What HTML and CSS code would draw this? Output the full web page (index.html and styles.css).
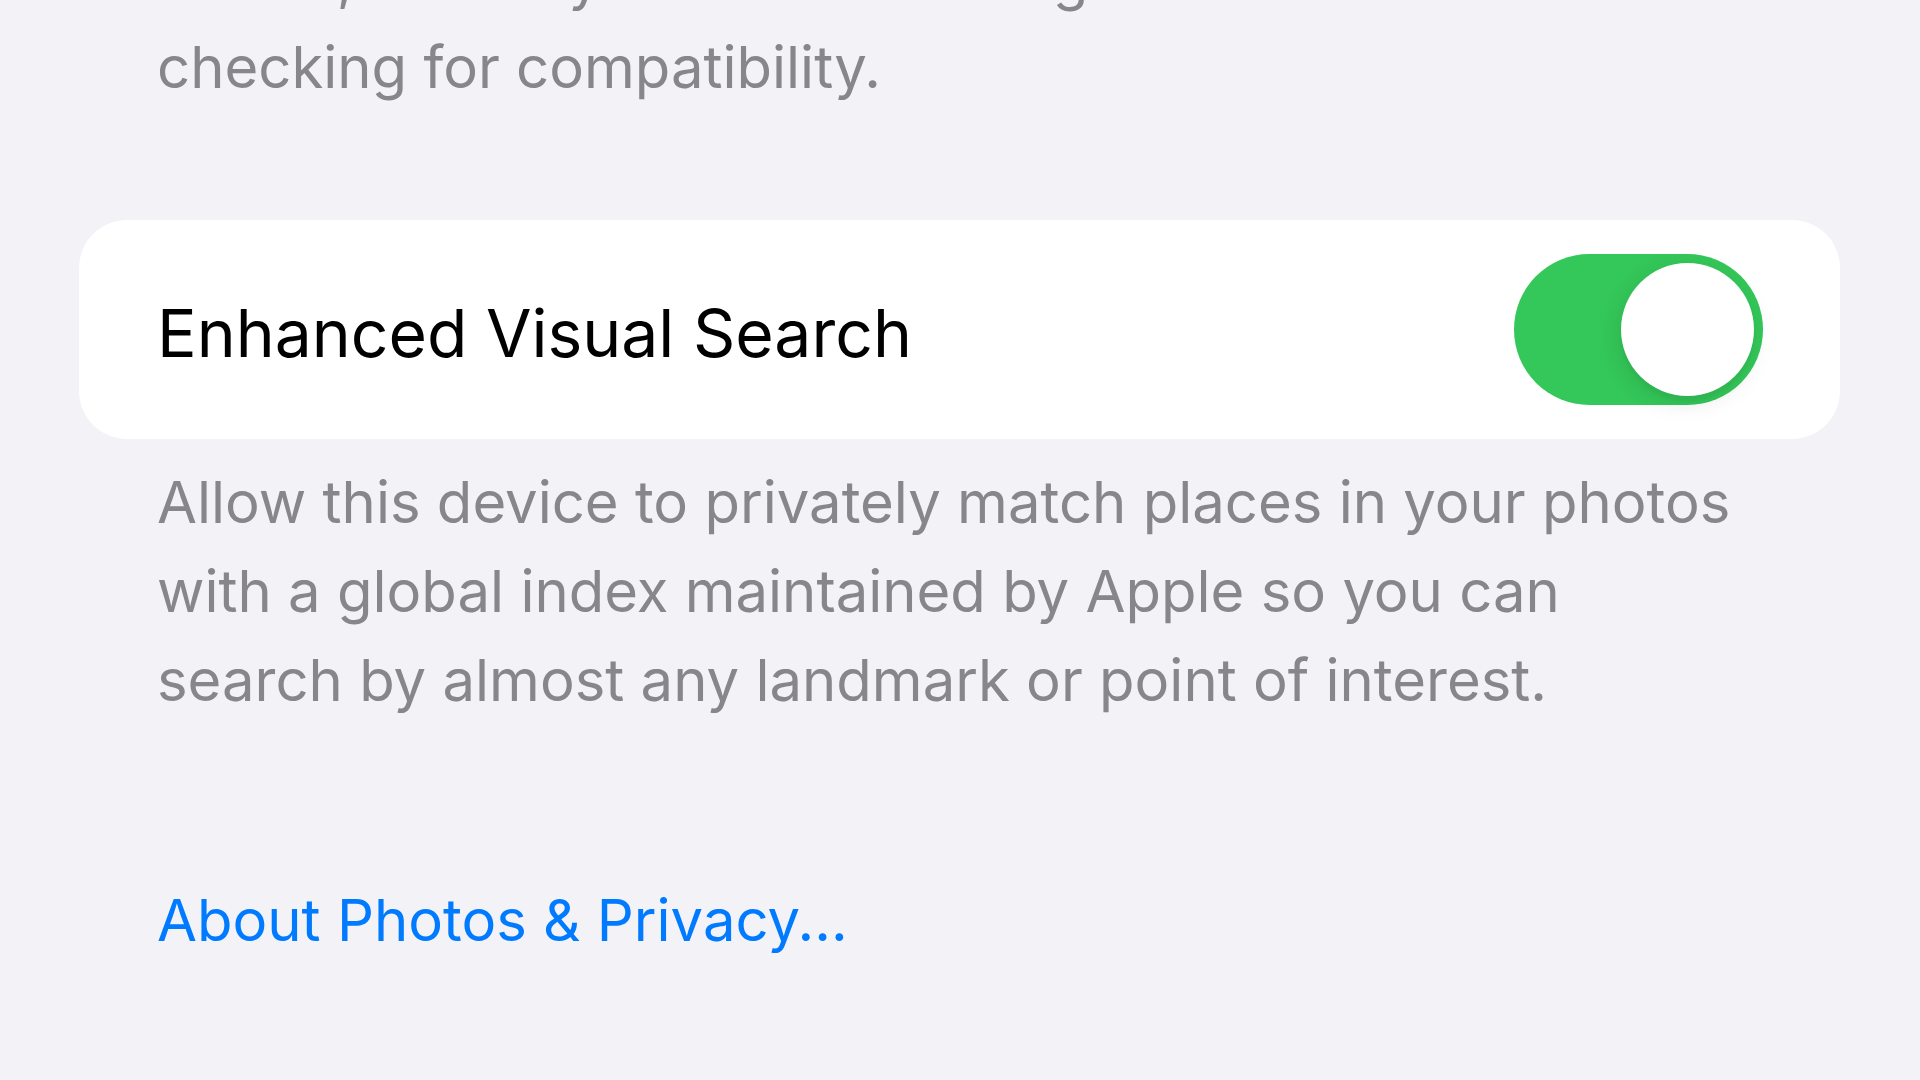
FILE: index.html
```html
<!DOCTYPE html>
<html lang="en">
<head>
  <meta charset="UTF-8" />
  <meta name="viewport" content="width=device-width, initial-scale=1.0"/>
  <title>Photos Settings</title>
  <link rel="stylesheet" href="styles.css">
</head>
<body>
  <div class="page">
    <p class="footer-text top-footer">
      Automatically transfer photos and videos in a compatible<br>
      format, or always transfer the original file without<br>
      checking for compatibility.
    </p>

    <div class="card">
      <span class="row-title">Enhanced Visual Search</span>
      <div class="toggle on">
        <div class="knob"></div>
      </div>
    </div>

    <p class="footer-text">
      Allow this device to privately match places in your photos<br>
      with a global index maintained by Apple so you can<br>
      search by almost any landmark or point of interest.
    </p>

    <a class="link" href="#">About Photos &amp; Privacy...</a>
  </div>
</body>
</html>
```

FILE: styles.css
```css
* {
  box-sizing: border-box;
}

html, body {
  margin: 0;
  height: 100%;
  overflow: hidden;
}

body {
  font-family: 'Inter', 'Liberation Sans', sans-serif;
  background-color: #f2f2f7;
  color: #000;
}

.page {
  padding: 0 80px 0 79px;
  display: flex;
  flex-direction: column;
}

.footer-text {
  margin: 19px 0 0;
  padding-left: 78px;
  font-size: 58px;
  line-height: 89px;
  color: #86868b;
}

.top-footer {
  margin-top: -155px;
}

.card {
  margin-top: 108px;
  height: 219px;
  background: white;
  border-radius: 48px;
  display: flex;
  align-items: center;
  justify-content: space-between;
  padding: 0 77px 0 78px;
}

.row-title {
  font-size: 66px;
  line-height: 1;
  margin-top: 7px;
}

.toggle {
  width: 249px;
  height: 151px;
  border-radius: 76px;
  padding: 9px;
  display: flex;
  justify-content: flex-end;
  background-color: #e9e9eb;
}

.toggle.on {
  background-color: #34c759;
}

.knob {
  width: 133px;
  height: 133px;
  border-radius: 50%;
  background: white;
  box-shadow: -2px 6px 24px rgba(0, 0, 0, 0.1), 0 6px 3px rgba(0, 0, 0, 0.03);
}

.link {
  margin-top: 151px;
  padding-left: 78px;
  font-size: 58px;
  line-height: 89px;
  color: #007aff;
  text-decoration: none;
}
```
